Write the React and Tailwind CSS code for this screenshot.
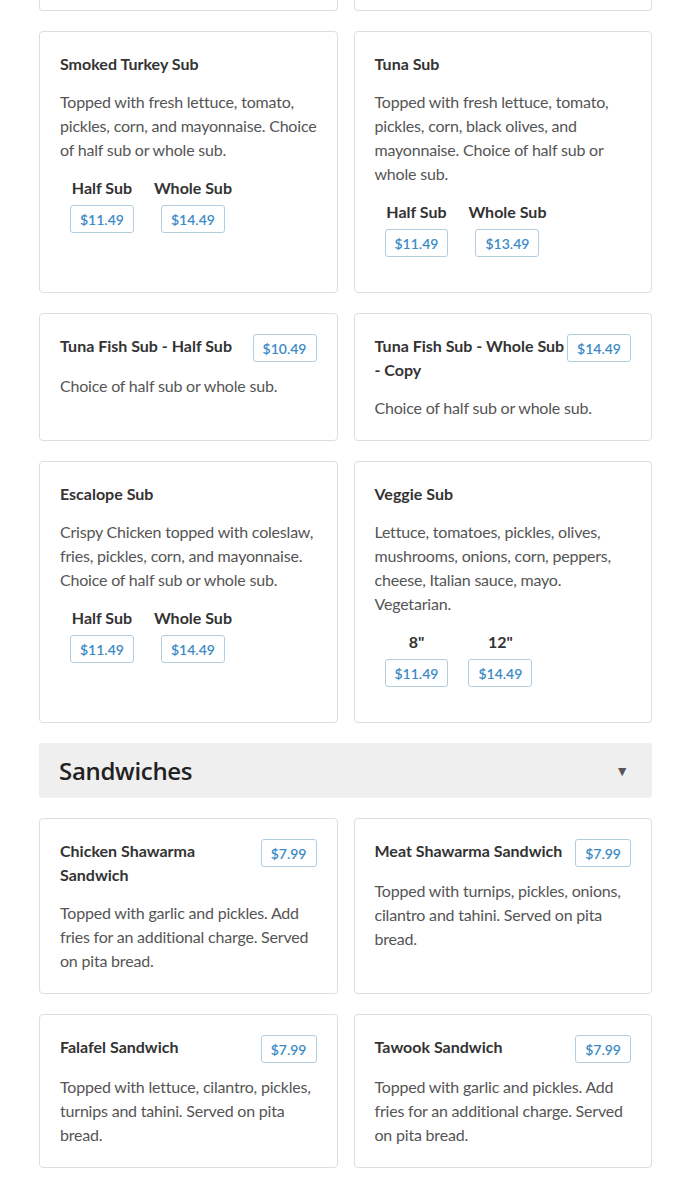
const SUBS = [
  {
    name: "Smoked Turkey Sub",
    desc: "Topped with fresh lettuce, tomato, pickles, corn, and mayonnaise. Choice of half sub or whole sub.",
    sizes: [["Half Sub", "$11.49"], ["Whole Sub", "$14.49"]],
  },
  {
    name: "Tuna Sub",
    desc: "Topped with fresh lettuce, tomato, pickles, corn, black olives, and mayonnaise. Choice of half sub or whole sub.",
    sizes: [["Half Sub", "$11.49"], ["Whole Sub", "$13.49"]],
  },
  { name: "Tuna Fish Sub - Half Sub", desc: "Choice of half sub or whole sub.", price: "$10.49" },
  { name: "Tuna Fish Sub - Whole Sub - Copy", desc: "Choice of half sub or whole sub.", price: "$14.49" },
  {
    name: "Escalope Sub",
    desc: "Crispy Chicken topped with coleslaw, fries, pickles, corn, and mayonnaise. Choice of half sub or whole sub.",
    sizes: [["Half Sub", "$11.49"], ["Whole Sub", "$14.49"]],
  },
  {
    name: "Veggie Sub",
    desc: "Lettuce, tomatoes, pickles, olives, mushrooms, onions, corn, peppers, cheese, Italian sauce, mayo. Vegetarian.",
    sizes: [['8"', "$11.49"], ['12"', "$14.49"]],
  },
];

const SANDWICHES = [
  { name: "Chicken Shawarma Sandwich", desc: "Topped with garlic and pickles. Add fries for an additional charge. Served on pita bread.", price: "$7.99" },
  { name: "Meat Shawarma Sandwich", desc: "Topped with turnips, pickles, onions, cilantro and tahini. Served on pita bread.", price: "$7.99" },
  { name: "Falafel Sandwich", desc: "Topped with lettuce, cilantro, pickles, turnips and tahini. Served on pita bread.", price: "$7.99" },
  { name: "Tawook Sandwich", desc: "Topped with garlic and pickles. Add fries for an additional charge. Served on pita bread.", price: "$7.99" },
];

function Price({ children, className = "" }) {
  return (
    <span
      className={`inline-flex h-[28px] items-center rounded-[3px] border border-[#b3cde0] bg-white px-[9px] text-[14px] font-semibold text-[#3d8bc6] ${className}`}
    >
      {children}
    </span>
  );
}

function ItemCard({ item }) {
  return (
    <div className="rounded-[4px] border border-[#dedede] bg-white px-5 pt-5 pb-5">
      <div className={`flex items-start justify-between gap-[2px] ${item.price ? "min-h-[26px]" : ""}`}>
        <h4 className="text-[16px] font-bold leading-6 text-[#333]">{item.name}</h4>
        {item.price && <Price className="-mb-[2px] shrink-0">{item.price}</Price>}
      </div>
      <p className="mt-[14px] text-[16px] leading-6 tracking-[-0.2px] text-[#555]">{item.desc}</p>
      {item.sizes && (
        <div className="mt-[14px] mb-[15px] flex">
          {item.sizes.map(([label, price]) => (
            <div key={label} className="mx-[10px] flex flex-col items-center gap-[5px]">
              <span className="text-[16px] font-bold leading-6 text-[#333]">{label}</span>
              <Price>{price}</Price>
            </div>
          ))}
        </div>
      )}
    </div>
  );
}

export default function App() {
  return (
    <div className="min-h-[1180px] bg-white pl-[39px] pr-[38px] font-['Lato','Liberation_Sans',sans-serif]">
      <div className="grid grid-cols-2 gap-x-4 gap-y-5">
        {/* bottom edge of the row scrolled above */}
        <div className="h-[11px] rounded-b-[4px] border border-t-0 border-[#dedede]" />
        <div className="h-[11px] rounded-b-[4px] border border-t-0 border-[#dedede]" />
        {SUBS.map((item) => (
          <ItemCard key={item.name} item={item} />
        ))}
      </div>

      <div className="mt-5 flex h-[55px] items-center justify-between rounded-[3px] bg-[#efefef] px-5">
        <h3 className="font-['Open_Sans','Noto_Sans',sans-serif] text-[24px] font-semibold tracking-[-0.3px] text-[#222]">Sandwiches</h3>
        <span className="mr-[3px] text-[14px] text-[#555]">▼</span>
      </div>

      <div className="mt-5 grid grid-cols-2 gap-x-4 gap-y-5">
        {SANDWICHES.map((item) => (
          <ItemCard key={item.name} item={item} />
        ))}
      </div>
    </div>
  );
}
